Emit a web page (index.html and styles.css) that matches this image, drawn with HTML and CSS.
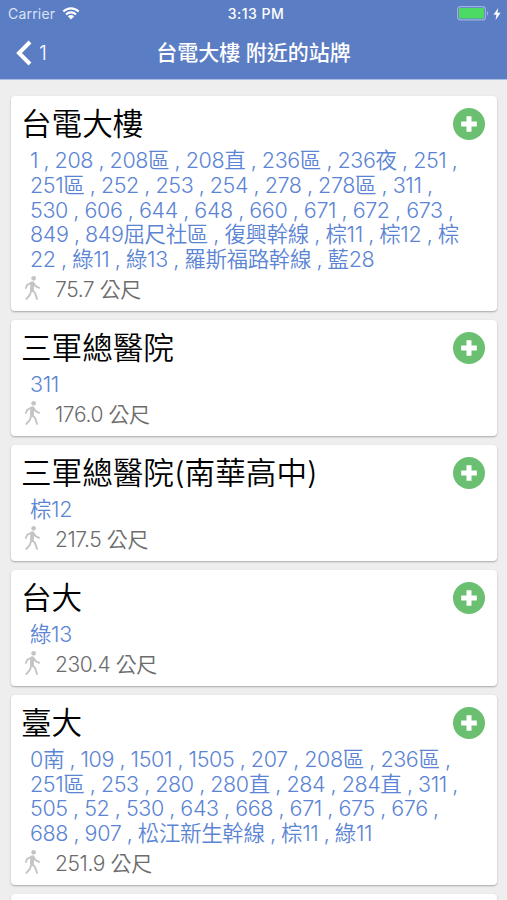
FILE: index.html
```
<!DOCTYPE html>
<html lang="zh-Hant">
<head>
    <meta charset="UTF-8">
    <meta name="viewport" content="width=device-width, initial-scale=1.0">
    <title>台電大樓 附近的站牌</title>
    <link rel="stylesheet" href="styles.css">
</head>
<body>
    <svg class="symbols">
        <symbol id="walk" viewBox="0 0 18 26">
            <circle cx="10.2" cy="2.7" r="2.5" fill="currentColor"/>
            <path d="M8.8 7L7.8 15M8.3 7.2L3.4 9.6L2 13M9.8 7.4L12.3 11L16 12.8M7.8 15L6.4 20L2.6 24.6M8 14.5L11.6 18.2L13.8 24.6" fill="none" stroke="currentColor" stroke-width="2" stroke-linecap="round" stroke-linejoin="round"/>
            <path d="M6.8 6.3L10.8 6.3L10.4 15.5L6.3 15Z" fill="currentColor"/>
        </symbol>
        <symbol id="plus" viewBox="0 0 32 32">
            <circle cx="16" cy="16" r="16" fill="#6bbf70"/>
            <path d="M16 8.2V23.8M8.2 16H23.8" stroke="#fff" stroke-width="5"/>
        </symbol>
    </svg>

    <header class="header">
        <div class="status-bar">
            <div class="status-left">
                <span class="carrier">Carrier</span>
                <svg class="wifi" viewBox="0 0 18 13">
                    <path d="M1.3 4.6C5.6 .3 12.4 .3 16.7 4.6M4 7.4C6.8 4.7 11.2 4.7 14 7.4" fill="none" stroke="#fff" stroke-width="2.1"/>
                    <path d="M5.8 9.3C7.6 7.6 10.4 7.6 12.2 9.3L9 12.6Z" fill="#fff"/>
                </svg>
            </div>
            <span class="clock">3:13 PM</span>
            <div class="status-right">
                <svg class="battery" viewBox="0 0 32 15">
                    <rect x=".6" y=".6" width="27.8" height="13.3" rx="3" fill="none" stroke="#9db3df" stroke-width="1.2"/>
                    <rect x="2" y="2" width="25" height="10.5" rx="1" fill="#4cd964"/>
                    <path d="M30 5C31.6 5.6 31.6 9 30 9.6Z" fill="#9db3df"/>
                </svg>
                <svg class="bolt" viewBox="0 0 8 12">
                    <path d="M5.2 0L.5 6.8H3.4L2.6 12L7.6 4.8H4.5Z" fill="#fff"/>
                </svg>
            </div>
        </div>
        <div class="nav-bar">
            <a class="back">
                <svg class="chevron" viewBox="0 0 16 26">
                    <path d="M14 2L3 13L14 24" fill="none" stroke="#fff" stroke-width="4"/>
                </svg>
                <span>1</span>
            </a>
            <h1>台電大樓 附近的站牌</h1>
        </div>
    </header>

    <main class="stop-list">
        <section class="card">
            <div class="card-head">
                <h2>台電大樓</h2>
                <svg class="add"><use href="#plus"/></svg>
            </div>
            <p class="routes">1 , 208 , 208區 , 208直 , 236區 , 236夜 , 251 ,<br>251區 , 252 , 253 , 254 , 278 , 278區 , 311 ,<br>530 , 606 , 644 , 648 , 660 , 671 , 672 , 673 ,<br>849 , 849屈尺社區 , 復興幹線 , 棕11 , 棕12 , 棕<br>22 , 綠11 , 綠13 , 羅斯福路幹線 , 藍28</p>
            <div class="distance"><svg class="walk"><use href="#walk"/></svg><span>75.7 公尺</span></div>
        </section>

        <section class="card">
            <div class="card-head">
                <h2>三軍總醫院</h2>
                <svg class="add"><use href="#plus"/></svg>
            </div>
            <p class="routes">311</p>
            <div class="distance"><svg class="walk"><use href="#walk"/></svg><span>176.0 公尺</span></div>
        </section>

        <section class="card">
            <div class="card-head">
                <h2>三軍總醫院(南華高中)</h2>
                <svg class="add"><use href="#plus"/></svg>
            </div>
            <p class="routes">棕12</p>
            <div class="distance"><svg class="walk"><use href="#walk"/></svg><span>217.5 公尺</span></div>
        </section>

        <section class="card">
            <div class="card-head">
                <h2>台大</h2>
                <svg class="add"><use href="#plus"/></svg>
            </div>
            <p class="routes">綠13</p>
            <div class="distance"><svg class="walk"><use href="#walk"/></svg><span>230.4 公尺</span></div>
        </section>

        <section class="card">
            <div class="card-head">
                <h2>臺大</h2>
                <svg class="add"><use href="#plus"/></svg>
            </div>
            <p class="routes">0南 , 109 , 1501 , 1505 , 207 , 208區 , 236區 ,<br>251區 , 253 , 280 , 280直 , 284 , 284直 , 311 ,<br>505 , 52 , 530 , 643 , 668 , 671 , 675 , 676 ,<br>688 , 907 , 松江新生幹線 , 棕11 , 綠11</p>
            <div class="distance"><svg class="walk"><use href="#walk"/></svg><span>251.9 公尺</span></div>
        </section>

        <section class="card"></section>
    </main>
</body>
</html>
```
FILE: styles.css
```
* {
    box-sizing: border-box;
}
body {
    margin: 0;
    height: 900px;
    overflow: hidden;
    background: #eeeeee;
    font-family: Inter, "Noto Sans CJK TC", sans-serif;
}
h1, h2, p {
    margin: 0;
}
svg {
    display: block;
    flex-shrink: 0;
}
.symbols {
    display: none;
}
.header {
    height: 80px;
    background: #5b7dc4;
    border-bottom: 1px solid #a9bde6;
    color: #fff;
}
.status-bar, .nav-bar {
    display: grid;
    grid-template-columns: 1fr auto 1fr;
    align-items: center;
}
.status-bar {
    height: 27px;
    padding: 0 6px 0 8px;
    font-size: 14px;
}
.status-left, .status-right {
    display: flex;
    align-items: center;
}
.status-left {
    gap: 7px;
}
.status-right {
    justify-content: flex-end;
    gap: 4px;
}
.carrier {
    color: #d9e2f5;
    letter-spacing: 0.2px;
}
.wifi {
    width: 18px;
    height: 13px;
}
.clock {
    padding-left: 3px;
    font-weight: 500;
    letter-spacing: 0.5px;
}
.battery {
    width: 32px;
    height: 15px;
}
.bolt {
    width: 8px;
    height: 12px;
}
.nav-bar {
    height: 51px;
    padding: 0 16px;
}
.back {
    display: flex;
    align-items: center;
    gap: 7px;
    font-size: 20px;
    font-weight: 300;
}
.chevron {
    width: 16px;
    height: 26px;
}
.nav-bar h1 {
    grid-column: 2;
    font-size: 21px;
    font-weight: 500;
    line-height: 26px;
}
.stop-list {
    display: flex;
    flex-direction: column;
    gap: 9px;
    height: 820px;
    overflow: hidden;
    padding: 16px 10px 0 11px;
}
.card {
    flex-shrink: 0;
    min-height: 116px;
    padding: 12px 12px 0 10px;
    background: #fff;
    border-radius: 4px;
    box-shadow: 0 1px 2px rgba(0, 0, 0, 0.3);
}
.card-head {
    display: flex;
    justify-content: space-between;
    height: 40px;
}
.card-head h2 {
    font-size: 30.6px;
    font-weight: 350;
    line-height: 32px;
    color: #000;
}
.add {
    width: 32px;
    height: 32px;
}
.routes {
    padding-left: 9px;
    font-size: 21.5px;
    font-weight: 350;
    line-height: 24.75px;
    letter-spacing: -0.38px;
    word-spacing: -0.25px;
    white-space: nowrap;
    color: #5b84d4;
}
.distance {
    display: flex;
    align-items: center;
    gap: 14px;
    height: 39px;
    padding: 0 0 6px 3px;
    font-size: 21px;
    font-weight: 350;
    letter-spacing: -0.4px;
    color: #6c6c6c;
}
.walk {
    width: 17px;
    height: 26px;
    color: #c4c4c4;
}
```
